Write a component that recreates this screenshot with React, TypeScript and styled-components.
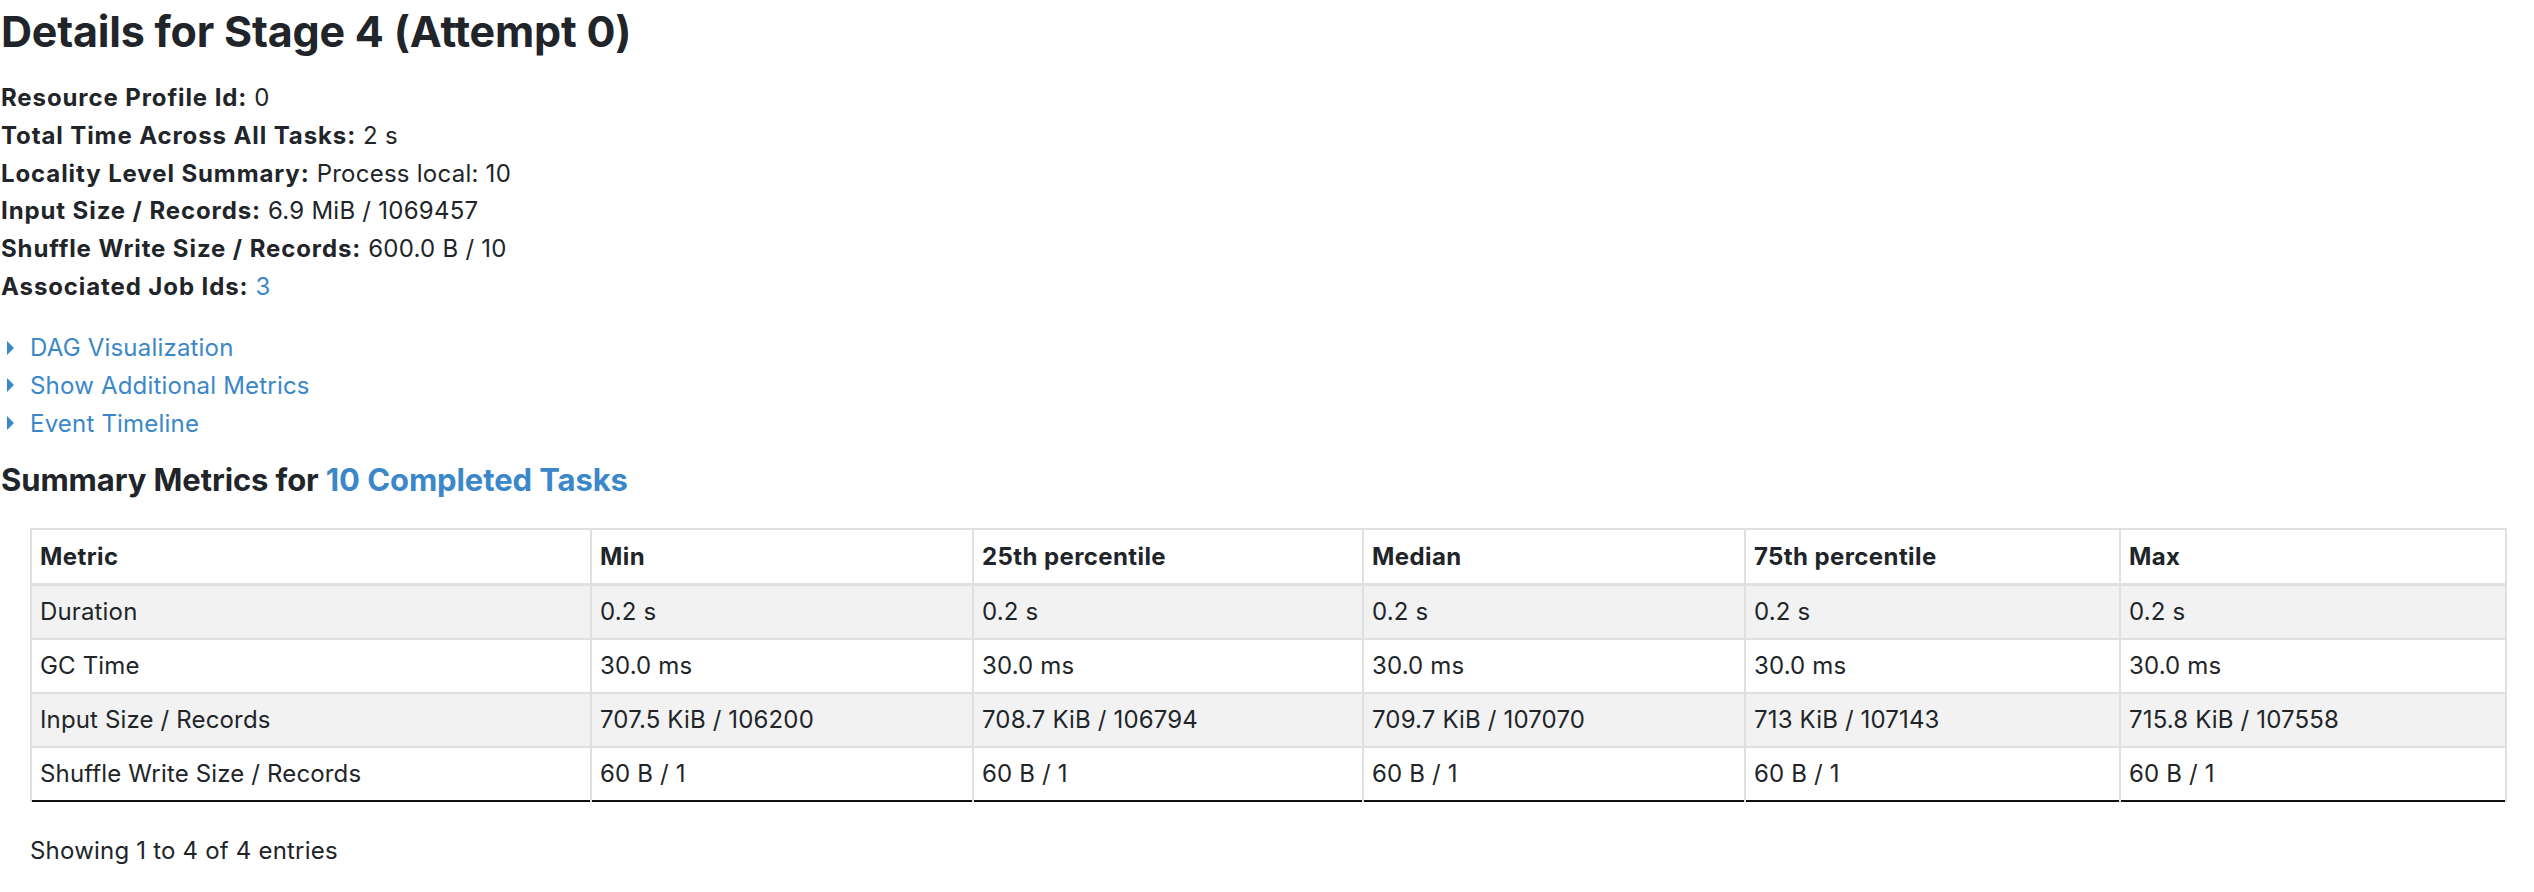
import React from "react";
import styled, { createGlobalStyle } from "styled-components";

const GlobalStyle = createGlobalStyle`
  html, body {
    margin: 0;
    padding: 0;
    background: #ffffff;
  }
  body {
    font-family: Inter, "Noto Sans", "Liberation Sans", sans-serif;
    color: #212529;
    font-size: 24px;
  }
`;

const Page = styled.div`
  padding: 0 28px 40px 1px;
`;

const Title = styled.h3`
  margin: 0;
  padding-top: 4px;
  font-size: 43px;
  line-height: 54px;
  font-weight: 700;
  letter-spacing: -0.2px;
`;

const InfoList = styled.ul`
  list-style: none;
  margin: 21px 0 0 0;
  padding: 0;
`;

const InfoItem = styled.li`
  font-size: 24px;
  line-height: 37.8px;
  letter-spacing: 0.25px;
`;

const Label = styled.strong`
  font-weight: 700;
  letter-spacing: 0.9px;
`;

const Link = styled.a`
  color: #3a87c9;
  text-decoration: none;
  cursor: pointer;
`;

const Toggles = styled.div`
  display: flex;
  flex-direction: column;
  margin-top: 23px;
`;

const Toggle = styled.div`
  display: flex;
  align-items: center;
  gap: 16px;
  height: 37.7px;
  color: #3a87c9;
  font-size: 24px;
  letter-spacing: 0.2px;
  padding-left: 6px;
`;

const Arrow = styled.span`
  width: 0;
  height: 0;
  border-top: 7px solid transparent;
  border-bottom: 7px solid transparent;
  border-left: 7px solid #3a87c9;
`;

const SectionTitle = styled.h4`
  margin: 18px 0 0 0;
  font-size: 31px;
  line-height: 40px;
  font-weight: 700;
  letter-spacing: -0.1px;
`;

const TableWrap = styled.div`
  margin: 28px 0 0 29px;
`;

const Table = styled.table`
  width: 100%;
  border-collapse: collapse;
  table-layout: fixed;
  border-bottom: 2px solid #111;
  font-size: 24px;
`;

const HeadCell = styled.th`
  text-align: left;
  font-weight: 700;
  letter-spacing: 0.4px;
  padding: 0 8px;
  height: 53px;
  border: 2px solid #e0e0e0;
  border-bottom-width: 3px;
`;

const Row = styled.tr<{ $striped: boolean }>`
  background: ${(p) => (p.$striped ? "#f2f2f2" : "#ffffff")};
`;

const Cell = styled.td`
  padding: 0 8px;
  height: 52px;
  letter-spacing: 0.15px;
  border-left: 2px solid #e0e0e0;
  border-right: 2px solid #e0e0e0;
  border-top: 2px solid #e0e0e0;
`;

const Footer = styled.div`
  margin: 34px 0 0 29px;
  font-size: 24px;
  line-height: 30px;
  letter-spacing: 0.2px;
`;

const columns = ["Metric", "Min", "25th percentile", "Median", "75th percentile", "Max"];
const widths = [560, 382, 390, 382, 375, 386];

const rows: string[][] = [
  ["Duration", "0.2 s", "0.2 s", "0.2 s", "0.2 s", "0.2 s"],
  ["GC Time", "30.0 ms", "30.0 ms", "30.0 ms", "30.0 ms", "30.0 ms"],
  [
    "Input Size / Records",
    "707.5 KiB / 106200",
    "708.7 KiB / 106794",
    "709.7 KiB / 107070",
    "713 KiB / 107143",
    "715.8 KiB / 107558",
  ],
  ["Shuffle Write Size / Records", "60 B / 1", "60 B / 1", "60 B / 1", "60 B / 1", "60 B / 1"],
];

export default function App() {
  return (
    <>
      <GlobalStyle />
      <Page>
        <Title>Details for Stage 4 (Attempt 0)</Title>
        <InfoList>
          <InfoItem>
            <Label>Resource Profile Id:</Label> 0
          </InfoItem>
          <InfoItem>
            <Label>Total Time Across All Tasks:</Label> 2 s
          </InfoItem>
          <InfoItem>
            <Label>Locality Level Summary:</Label> Process local: 10
          </InfoItem>
          <InfoItem>
            <Label>Input Size / Records:</Label> 6.9 MiB / 1069457
          </InfoItem>
          <InfoItem>
            <Label>Shuffle Write Size / Records:</Label> 600.0 B / 10
          </InfoItem>
          <InfoItem>
            <Label>Associated Job Ids:</Label> <Link>3</Link>
          </InfoItem>
        </InfoList>
        <Toggles>
          <Toggle>
            <Arrow />
            DAG Visualization
          </Toggle>
          <Toggle>
            <Arrow />
            Show Additional Metrics
          </Toggle>
          <Toggle>
            <Arrow />
            Event Timeline
          </Toggle>
        </Toggles>
        <SectionTitle>
          Summary Metrics for <Link>10 Completed Tasks</Link>
        </SectionTitle>
        <TableWrap>
          <Table>
            <colgroup>
              {widths.map((w, i) => (
                <col key={i} style={{ width: `${w}px` }} />
              ))}
            </colgroup>
            <thead>
              <tr>
                {columns.map((c) => (
                  <HeadCell key={c}>{c}</HeadCell>
                ))}
              </tr>
            </thead>
            <tbody>
              {rows.map((r, i) => (
                <Row key={i} $striped={i % 2 === 0}>
                  {r.map((v, j) => (
                    <Cell key={j}>{v}</Cell>
                  ))}
                </Row>
              ))}
            </tbody>
          </Table>
        </TableWrap>
        <Footer>Showing 1 to 4 of 4 entries</Footer>
      </Page>
    </>
  );
}
